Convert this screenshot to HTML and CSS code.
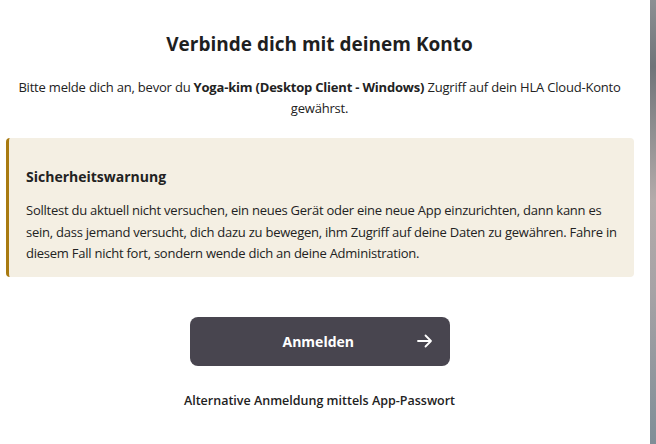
FILE: index.html
```html
<!DOCTYPE html>
<html>
	<head>
		<title>Verbinde dich mit deinem Konto</title>
		<link rel="stylesheet" href="styles.css">
	</head>
	<body>
		<div id="card">
			<div id="content">
				<h2 id="title">Verbinde dich mit deinem Konto</h2>
				<p id="intro">Bitte melde dich an, bevor du <b>Yoga-kim (Desktop Client - Windows)</b> Zugriff auf dein HLA Cloud-Konto gewährst.</p>
				<div id="warning">
					<h3>Sicherheitswarnung</h3>
					<p>Solltest du aktuell nicht versuchen, ein neues Gerät oder eine neue App einzurichten, dann kann es sein, dass jemand versucht, dich dazu zu bewegen, ihm Zugriff auf deine Daten zu gewähren. Fahre in diesem Fall nicht fort, sondern wende dich an deine Administration.</p>
				</div>
				<div id="actions">
					<button id="login">
						<span>Anmelden</span>
						<svg width="18" height="18" viewBox="0 0 18 18"><path d="M2 9h13M9.5 3.5L15 9l-5.5 5.5" fill="none" stroke="#fff" stroke-width="1.8" stroke-linecap="round" stroke-linejoin="round"/></svg>
					</button>
					<a href="#" id="alt-login">Alternative Anmeldung mittels App-Passwort</a>
				</div>
			</div>
		</div>
		<div id="backdrop"></div>
	</body>
</html>
```

FILE: styles.css
```css
body
{
	margin: 0;
	display: flex;
	height: 444px;
	overflow: hidden;
	font-family: "Open Sans", sans-serif;
	color: #222;
}

#card
{
	width: 650px;
	background-color: white;
}

#content
{
	width: 639px;
	padding-top: 30px;
	text-align: center;
}

#title
{
	margin: 0;
	font-size: 19px;
	line-height: 28px;
	font-weight: 700;
	color: #1f1f1f;
}

#intro
{
	margin: 19px 10px 0 10px;
	font-size: 13px;
	line-height: 21px;
	letter-spacing: -0.2px;
}

#intro b
{
	font-weight: 700;
}

#warning
{
	margin: 19px 5px 0 6px;
	padding: 29px 16px 12px 17px;
	background-color: #f4efe3;
	border-left: 3px solid #a87a10;
	border-radius: 4px;
	text-align: left;
}

#warning h3
{
	margin: 0 0 13px 0;
	font-size: 14px;
	line-height: 20px;
	font-weight: 700;
}

#warning p
{
	margin: 0;
	font-size: 13px;
	line-height: 21.5px;
	letter-spacing: -0.24px;
}

#actions
{
	display: flex;
	flex-direction: column;
	align-items: center;
	padding-top: 40px;
}

#login
{
	display: flex;
	align-items: center;
	justify-content: space-between;
	width: 260px;
	height: 49px;
	padding: 0 16px 0 93px;
	border: none;
	border-radius: 8px;
	background-color: #48454f;
	color: white;
	font-family: "Open Sans", sans-serif;
	font-size: 14px;
	font-weight: 700;
}

#alt-login
{
	margin-top: 26px;
	font-size: 12.5px;
	font-weight: 600;
	color: #222;
	text-decoration: none;
}

#backdrop
{
	flex: 1;
	background: linear-gradient(to bottom, #8d8f93 0%, #6f7479 15%, #b3abaa 45%, #a7a3a6 65%, #7f8e97 100%);
}
```
